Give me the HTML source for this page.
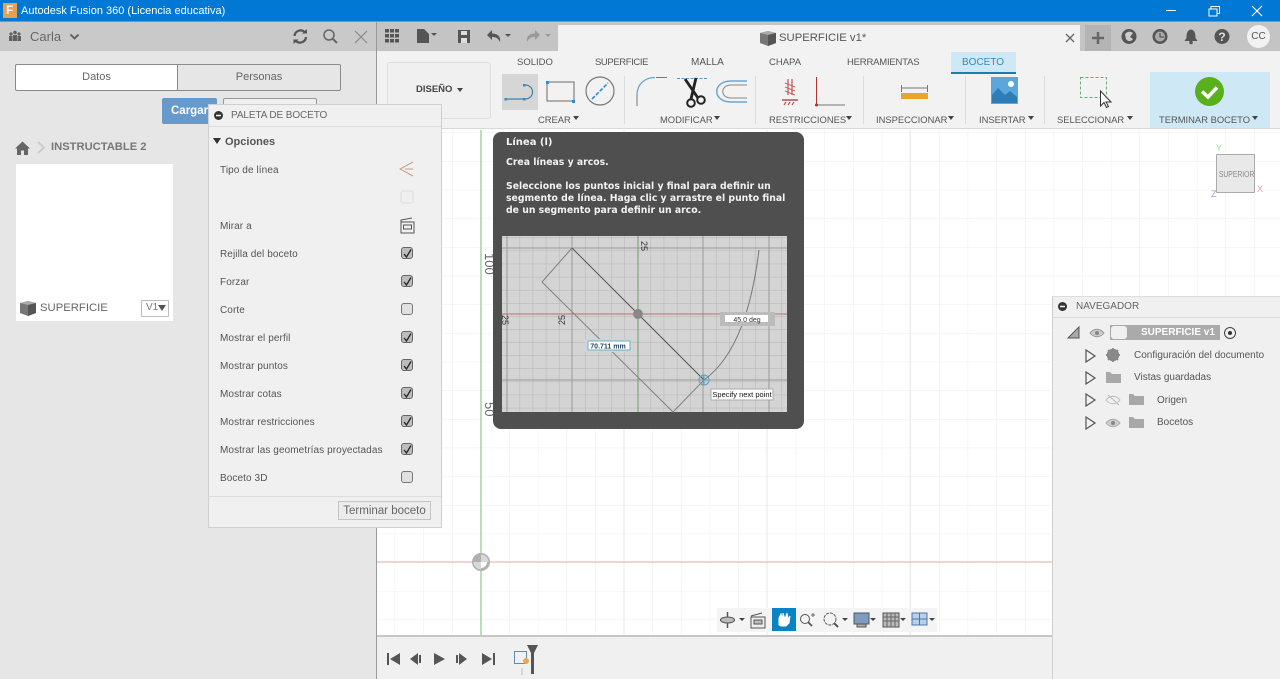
<!DOCTYPE html>
<html><head><meta charset="utf-8"><title>Fusion 360</title>
<style>
html,body{margin:0;padding:0;width:1280px;height:679px;overflow:hidden;background:#fff}
body{position:relative;font-family:"Liberation Sans",sans-serif;color:#555}
.a,.t{position:absolute}
.t{white-space:nowrap;line-height:14px;font-size:10px}
svg{position:absolute;overflow:visible}
.c{text-align:center}
.tab{top:56px;font-size:9.5px;color:#555}
.lab{top:113px;font-size:9.4px;color:#555}
.sep{position:absolute;top:76px;width:1px;height:48px;background:#dcdcdc}
.row{left:220px;font-size:10px;color:#555;letter-spacing:.09px}
.cb{position:absolute;left:401px;width:10px;height:10px;border:1px solid #666;border-radius:3px;background:#bdbdbd}
.tip{left:506px;color:#f2f2f2;font-family:"DejaVu Sans",sans-serif;font-weight:bold;font-size:9.3px;line-height:12px}
.nav{font-size:10px;color:#555}
</style></head><body>

<!-- canvas -->
<svg style="left:377px;top:130px" width="903" height="505">
<defs><pattern id="g" x="-10.5" y="3" width="28.65" height="28.65" patternUnits="userSpaceOnUse"><path d="M28.65 0V28.65M0 28.65H28.65" stroke="#ececec" fill="none"/></pattern></defs>
<rect width="903" height="505" fill="#fff"/><rect width="903" height="505" fill="url(#g)"/>
<path d="M247 0V505M390 0V505M533 0V505" stroke="#e8e8e8"/>
<path d="M0 432H676" stroke="#e6aeae"/><path d="M104 0V505" stroke="#a6d8a6" stroke-width="1.600"/>
<circle cx="104" cy="432" r="7.500" fill="#fff" stroke="#b0b0b0" stroke-width="3"/><path d="M104 432V424.500A7.500 7.500 0 0 0 96.500 432Z" fill="#b0b0b0"/><path d="M104 432V424.500A7.500 7.500 0 0 1 111.500 432Z" fill="#d8d8d8"/><path d="M104 432V439.500A7.500 7.500 0 0 1 96.500 432Z" fill="#d8d8d8"/>
<text transform="translate(108,123) rotate(90)" font-family="Liberation Sans" font-size="13" fill="#666">100</text>
<text transform="translate(108,272) rotate(90)" font-family="Liberation Sans" font-size="13" fill="#666">50</text>
</svg>

<!-- title bar -->
<div class="a" style="left:0;top:0;width:1280px;height:21px;background:#0078d4"></div>
<div class="a" style="left:0;top:21px;width:1280px;height:1px;background:#5b9fd6"></div>
<div class="a" style="left:3px;top:3px;width:14px;height:15px;background:#e8a050"></div>
<div class="t" style="left:6px;top:3px;font-size:12px;font-weight:bold;color:#fff">F</div>
<div class="t" style="left:21px;top:4px;font-size:11px;color:#fff">Autodesk Fusion 360 (Licencia educativa)</div>
<svg style="left:1160px;top:3px" width="110" height="16" fill="none" stroke="#fff"><path d="M6 7.500H16"/><path d="M49 6H57V13H49ZM51 6V3.500H59.500V10.500H57" stroke-width="1"/><path d="M92 3L102 13M102 3L92 13" stroke-width="1.200"/></svg>

<!-- left panel -->
<div class="a" style="left:0;top:22px;width:376px;height:657px;background:#e6e6e6"></div>
<div class="a" style="left:0;top:22px;width:376px;height:29px;background:#c9c9c9"></div>
<svg style="left:7px;top:30px" width="16" height="12" fill="#5f5f5f"><circle cx="4" cy="4" r="1.600"/><circle cx="8" cy="2.500" r="1.800"/><circle cx="12" cy="4" r="1.600"/><rect x="2" y="6" width="3.500" height="5"/><rect x="6" y="5" width="4" height="6"/><rect x="10.500" y="6" width="3.500" height="5"/></svg>
<div class="t" style="left:30px;top:30px;font-size:13px;color:#666">Carla</div>
<svg style="left:69px;top:33px" width="11" height="8" fill="none" stroke="#666" stroke-width="2"><path d="M1.500 1.500L5.500 5.500L9.500 1.500"/></svg>
<svg style="left:292px;top:28px" width="78" height="17" fill="none" stroke="#555"><path d="M2.500 8A6 6 0 0 1 13 4.500M14 9A6 6 0 0 1 3.500 12.500" stroke-width="2.200"/><path d="M10 5.500H15V1ZM6.500 11.500H1.500V16Z" fill="#555" stroke="none"/><circle cx="37" cy="7" r="5" stroke="#666" stroke-width="1.500"/><path d="M41 11L45 15" stroke="#666" stroke-width="2"/><path d="M63 3L75 15M75 3L63 15" stroke="#888" stroke-width="1.200"/></svg>

<div class="a" style="left:15px;top:64px;width:324px;height:25px;border:1px solid #8a8a8a;border-radius:2px;background:#e6e6e6"></div>
<div class="a" style="left:16px;top:65px;width:161px;height:25px;background:#fff;border-right:1px solid #8a8a8a;border-radius:2px 0 0 2px"></div>
<div class="t c" style="left:16px;top:70px;width:161px;font-size:11px;color:#666">Datos</div>
<div class="t c" style="left:178px;top:70px;width:162px;font-size:11px;color:#666">Personas</div>
<div class="a" style="left:162px;top:98px;width:55px;height:26px;background:#6699cc;border-radius:2px"></div>
<div class="t" style="left:171px;top:104px;font-size:11.500px;font-weight:bold;color:#fff">Cargar</div>
<div class="a" style="left:223px;top:98px;width:92px;height:10px;border:1px solid #999;border-bottom:0;border-radius:2px 2px 0 0;background:#efefef"></div>

<svg style="left:15px;top:141px" width="15" height="14" fill="#666"><path d="M7.500 0.500L15 7.500H13V14H9V9.500H6V14H2V7.500H0Z"/></svg>
<svg style="left:36px;top:141px" width="10" height="13" fill="none" stroke="#ccc" stroke-width="2"><path d="M2 1L8 6.500L2 12"/></svg>
<div class="t" style="left:51px;top:140px;font-size:11.200px;font-weight:bold;color:#777">INSTRUCTABLE 2</div>
<div class="a" style="left:16px;top:164px;width:157px;height:157px;background:#fff"></div>
<svg style="left:20px;top:301px" width="16" height="15"><path d="M0 2L8 0L16 2V12L8 15L0 12Z" fill="#777"/><path d="M0 2L8 4L16 2L8 0Z" fill="#aaa"/><path d="M8 4V15L16 12V2Z" fill="#555"/></svg>
<div class="t" style="left:40px;top:301px;font-size:11.300px;color:#666">SUPERFICIE</div>
<div class="a" style="left:141px;top:300px;width:26px;height:15px;border:1px solid #bbb;border-radius:1px;background:#fff"></div>
<div class="t" style="left:146px;top:301px;font-size:10px;color:#777">V1</div>
<svg style="left:158px;top:305px" width="8" height="6" fill="#555"><path d="M0 0H8L4 6Z"/></svg>

<!-- top bar -->
<div class="a" style="left:377px;top:22px;width:903px;height:29px;background:#c4c4c4"></div>
<div class="a" style="left:376px;top:22px;width:1px;height:657px;background:#9a9a9a"></div>
<div class="a" style="left:558px;top:25px;width:522px;height:26px;background:#f2f2f2"></div>
<div class="a" style="left:377px;top:51px;width:903px;height:78px;background:#f2f2f2"></div>
<div class="a" style="left:377px;top:128px;width:903px;height:1px;background:#d8d8d8"></div>
<svg style="left:385px;top:28px" width="170" height="17">
<g fill="#555"><rect x="0" y="1" width="4" height="3.500"/><rect x="5" y="1" width="4" height="3.500"/><rect x="10" y="1" width="4" height="3.500"/><rect x="0" y="6" width="4" height="3.500"/><rect x="5" y="6" width="4" height="3.500"/><rect x="10" y="6" width="4" height="3.500"/><rect x="0" y="11" width="4" height="3.500"/><rect x="5" y="11" width="4" height="3.500"/><rect x="10" y="11" width="4" height="3.500"/>
<path d="M32 1H39L44 6V15H32Z"/><path d="M46 5H52L49 8Z"/>
<path d="M73 2H85V15H73Z"/><path d="M102 7L107 2V5.500C112 5.500 116 8 115 14C113 10 111 9 107 9V12Z"/><path d="M120 6H126L123 9Z"/></g>
<rect x="76" y="3" width="6" height="4" fill="#ddd"/><rect x="76" y="10" width="6" height="5" fill="#ddd"/>
<g fill="#999"><path d="M160 7L155 2V5.500C150 5.500 146 8 147 14C149 10 151 9 155 9V12Z" transform="translate(-5,0)"/><path d="M160 6H166L163 9Z"/></g>
</svg>
<svg style="left:760px;top:31px" width="16" height="15"><path d="M0 2L8 0L16 2V12L8 15L0 12Z" fill="#777"/><path d="M0 2L8 4L16 2L8 0Z" fill="#aaa"/><path d="M8 4V15L16 12V2Z" fill="#555"/></svg>
<div class="t" style="left:779px;top:31px;font-size:11.300px;color:#555">SUPERFICIE v1*</div>
<svg style="left:1065px;top:33px" width="10" height="10" fill="none" stroke="#666" stroke-width="1.300"><path d="M1 1L9 9M9 1L1 9"/></svg>
<div class="a" style="left:1085px;top:25px;width:26px;height:26px;background:#b4b4b4"></div>
<svg style="left:1091px;top:31px" width="14" height="14" fill="none" stroke="#666" stroke-width="2.500"><path d="M7 1V13M1 7H13"/></svg>
<svg style="left:1121px;top:28px" width="150" height="18" fill="#555">
<circle cx="8" cy="8.500" r="7.500"/><path d="M4 6.500A5 5 0 0 1 12 5L9 9L12 11A4 4 0 0 1 5 11Z" fill="#ccc"/>
<circle cx="39" cy="8.500" r="7.500"/><circle cx="39" cy="8.500" r="5" fill="#aaa"/><path d="M39 5V9H43" stroke="#444" fill="none"/>
<path d="M70 1.500C66 2 65.500 6 65.500 10L63.500 13H76.500L74.500 10C74.500 6 74 2 70 1.500Z"/><circle cx="70" cy="14.500" r="1.800"/>
<circle cx="101" cy="8.500" r="7.500"/><text x="101" y="13" text-anchor="middle" font-size="12" font-weight="bold" fill="#ddd" font-family="Liberation Sans">?</text></svg>
<div class="a" style="left:1247px;top:25px;width:23px;height:23px;border-radius:50%;background:#f2f2f2"></div>
<div class="t c" style="left:1247px;top:30px;width:23px;font-size:10px;color:#555">CC</div>

<!-- diseño -->
<div class="a" style="left:387px;top:62px;width:102px;height:55px;background:#f0f0f0;border:1px solid #dedede;border-radius:3px"></div>
<div class="t" style="left:416px;top:83px;font-size:9.500px;font-weight:bold;color:#444">DISEÑO</div>
<svg style="left:457px;top:88px" width="6" height="4" fill="#444"><path d="M0 0H6L3 4Z"/></svg>

<!-- tabs -->
<div class="t tab" style="left:517px">SOLIDO</div>
<div class="t tab" style="left:595px;letter-spacing:-.4px">SUPERFICIE</div>
<div class="t tab" style="left:691px;font-size:10px">MALLA</div>
<div class="t tab" style="left:769px">CHAPA</div>
<div class="t tab" style="left:847px;letter-spacing:-.2px">HERRAMIENTAS</div>
<div class="a" style="left:951px;top:52px;width:65px;height:20px;background:#cfe8f5"></div>
<div class="a" style="left:951px;top:72px;width:65px;height:2px;background:#1a7fb0"></div>
<div class="t tab" style="left:962px;color:#2a8fc5;font-size:10px">BOCETO</div>

<div class="a" style="left:502px;top:74px;width:36px;height:36px;background:#d6d6d6"></div>
<svg style="left:500px;top:74px" width="350" height="36" fill="none" stroke="#777">
<path d="M6 25H25C35 25 35 11 25 11" stroke="#4a7fa5" stroke-width="1.200"/>
<g fill="#2a8fd0" stroke="none"><rect x="4.500" y="24" width="2.500" height="2.500"/><rect x="23" y="24" width="2.500" height="2.500"/><rect x="23" y="10" width="2.500" height="2.500"/></g>
<rect x="47" y="8" width="27" height="19" stroke-width="1.100"/>
<g fill="#2a8fd0" stroke="none"><rect x="46" y="7" width="3" height="3"/><rect x="72" y="26" width="3" height="3"/></g>
<circle cx="100" cy="17" r="14" stroke-width="1.200"/><path d="M92 25L108 9" stroke="#2a8fd0" stroke-width="1.600" stroke-dasharray="4 1.500"/>
<path d="M137 32V21" stroke="#777"/><path d="M137 21C137 10 145 3.500 155 3.500" stroke="#6aa7d0" stroke-width="1.300"/><path d="M156 3.500H167" stroke="#777"/>
<path d="M177 4.500H207" stroke="#5a9ac8" stroke-dasharray="3 1.500"/>
<path d="M185 5L198 24M196 4L191 25" stroke="#222" stroke-width="2.800"/><circle cx="191" cy="29" r="3.800" stroke="#222" stroke-width="2"/><circle cx="201" cy="26" r="3.800" stroke="#222" stroke-width="2"/>
<path d="M247 7H231C212 7 212 28 231 28H247" stroke="#6aa7d0" stroke-width="1.500"/><path d="M247 11H231C220 11 220 24 231 24H247" stroke="#888"/>
<path d="M288 5V21M292 5V21" stroke="#a33"/><path d="M285 9L295 13M285 13L295 17M285 17L295 21" stroke="#c66"/><path d="M282 26H298" stroke="#a33" stroke-width="1.300"/><path d="M284 31L286 28M288 31L290 28M292 31L294 28" stroke="#a33"/>
<path d="M316.500 3V31" stroke="#a33"/><path d="M316 31H345" stroke="#777"/><circle cx="316.500" cy="31" r="1.500" fill="#a33" stroke="none"/>
</svg>
<div class="sep" style="left:624px"></div><div class="sep" style="left:755px"></div><div class="sep" style="left:863px"></div><div class="sep" style="left:965px"></div><div class="sep" style="left:1044px"></div>
<div class="a" style="left:1150px;top:72px;width:120px;height:56px;background:#cfe8f5"></div>
<svg style="left:900px;top:76px" width="340" height="40" fill="none">
<path d="M1.500 9V16M27.500 9V16M1 12H28" stroke="#777"/><rect x="1" y="17" width="27" height="6" fill="#eba42c"/>
<rect x="91" y="1" width="27" height="27" fill="#5da6dc"/><path d="M92 27V19L98 12L105 19L110 15L117 21V27Z" fill="#2c7db8"/><circle cx="111" cy="8" r="3" fill="#fff"/>
<rect x="180.500" y="1.500" width="26" height="20" stroke="#70a878" stroke-dasharray="3 2"/>
<path d="M200.500 15V30L204 26.500L206.500 31.500L208.500 30.500L206 26H211Z" fill="#fff" stroke="#333"/>
<circle cx="309.500" cy="15.500" r="14.500" fill="#5ab01c"/><path d="M302 15.500L308 21L317 11.500" stroke="#fff" stroke-width="3.500"/>
</svg>
<div class="t lab" style="left:538px">CREAR</div><svg style="left:573px;top:116px" width="6" height="4" fill="#444"><path d="M0 0H6L3 4Z"/></svg>
<div class="t lab" style="left:660px">MODIFICAR</div><svg style="left:714px;top:116px" width="6" height="4" fill="#444"><path d="M0 0H6L3 4Z"/></svg>
<div class="t lab" style="left:769px">RESTRICCIONES</div><svg style="left:846px;top:116px" width="6" height="4" fill="#444"><path d="M0 0H6L3 4Z"/></svg>
<div class="t lab" style="left:876px">INSPECCIONAR</div><svg style="left:948px;top:116px" width="6" height="4" fill="#444"><path d="M0 0H6L3 4Z"/></svg>
<div class="t lab" style="left:979px">INSERTAR</div><svg style="left:1028px;top:116px" width="6" height="4" fill="#444"><path d="M0 0H6L3 4Z"/></svg>
<div class="t lab" style="left:1057px">SELECCIONAR</div><svg style="left:1127px;top:116px" width="6" height="4" fill="#444"><path d="M0 0H6L3 4Z"/></svg>
<div class="t lab" style="left:1159px">TERMINAR BOCETO</div><svg style="left:1252px;top:116px" width="6" height="4" fill="#444"><path d="M0 0H6L3 4Z"/></svg>

<!-- viewcube -->
<div class="a" style="left:1216px;top:154px;width:37px;height:37px;background:#e9e9e9;border:1px solid #aaa;border-radius:1px"></div>
<div class="t c" style="left:1216px;top:168px;width:38px;font-size:8px;color:#888;transform:scaleX(.85)">SUPERIOR</div>
<div class="t" style="left:1216px;top:141px;font-size:9px;color:#a6d8a6">Y</div>
<div class="t" style="left:1257px;top:182px;font-size:9px;color:#f0a0a0">X</div>
<div class="t" style="left:1211px;top:187px;font-size:9px;color:#a0a0e0">Z</div>

<!-- tooltip -->
<div class="a" style="left:493px;top:132px;width:311px;height:297px;background:#4f4f4f;border-radius:8px"></div>
<div class="t tip" style="left:506px;top:137px;font-size:10px">Línea (l)</div>
<div class="t tip" style="left:506px;top:157px">Crea líneas y arcos.</div>
<div class="t tip" style="left:506px;top:181px">Seleccione los puntos inicial y final para definir un</div>
<div class="t tip" style="left:506px;top:193px">segmento de línea. Haga clic y arrastre el punto final</div>
<div class="t tip" style="left:506px;top:205px">de un segmento para definir un arco.</div>
<svg style="left:502px;top:236px" width="285" height="176">
<defs><pattern id="g2" x="5" y="2" width="13.100" height="13.100" patternUnits="userSpaceOnUse"><path d="M13.100 0V13.100M0 13.100H13.100" stroke="#b4b4b4" fill="none"/></pattern></defs>
<rect width="285" height="176" fill="#d4d4d4"/><rect width="285" height="176" fill="url(#g2)"/>
<path d="M5 0V176M70 0V176M136 0V176M201 0V176M267 0V176M0 12H285M0 78H285M0 144H285" stroke="#9a9a9a" fill="none"/>
<path d="M0 78H285" stroke="#c46a6a"/><path d="M136 0V176" stroke="#6aa06a"/>
<path d="M70 12L40 46L171 176L202 144" fill="none" stroke="#808080"/><path d="M70 12L202 144" fill="none" stroke="#555"/>
<path d="M202 144C235 120 250 70 257 14" fill="none" stroke="#777"/>
<circle cx="136" cy="78" r="5" fill="#888"/><circle cx="202" cy="144" r="5" fill="none" stroke="#5a9fc0"/><path d="M197 144H207M202 139V149" stroke="#5a9fc0"/>
<rect x="218" y="76" width="55" height="14" fill="#bbb"/><rect x="223" y="79" width="43" height="7" fill="#fff"/>
<text x="245" y="86" text-anchor="middle" font-family="Liberation Sans" font-size="7" fill="#333">45.0 deg</text>
<rect x="83" y="103" width="47" height="13" fill="#c5d8ea"/><rect x="86" y="105" width="42" height="9" fill="#fff" stroke="#7aa"/>
<text x="106" y="112.500" text-anchor="middle" font-family="Liberation Sans" font-size="7" font-weight="bold" fill="#246">70.711 mm</text>
<rect x="209" y="153" width="62" height="11" fill="#fff" stroke="#aaa"/>
<text x="240" y="161" text-anchor="middle" font-family="Liberation Sans" font-size="7.500" fill="#111">Specify next point</text>
<text transform="translate(139,5) rotate(90)" font-family="Liberation Sans" font-size="9" fill="#333">25</text>
<text transform="translate(63,89) rotate(-90)" font-family="Liberation Sans" font-size="9" fill="#333">25</text>
<text transform="translate(0,79) rotate(90)" font-family="Liberation Sans" font-size="9" fill="#333">25</text>
</svg>

<!-- palette -->
<div class="a" style="left:208px;top:104px;width:232px;height:422px;background:#f0f0f0;border:1px solid #cfcfcf"></div>
<div class="a" style="left:209px;top:126px;width:232px;height:1px;background:#dcdcdc"></div>
<svg style="left:214px;top:111px" width="9" height="9"><circle cx="4.500" cy="4.500" r="4.500" fill="#333"/><rect x="2" y="3.700" width="5" height="1.600" fill="#eee"/></svg>
<div class="t" style="left:231px;top:109px;font-size:10px;color:#666;letter-spacing:-.1px">PALETA DE BOCETO</div>
<svg style="left:213px;top:138px" width="8" height="6" fill="#333"><path d="M0 0H8L4 6Z"/></svg>
<div class="t" style="left:225px;top:135px;font-size:11px;font-weight:bold;color:#555">Opciones</div>
<div class="t row" style="top:164px">Tipo de línea</div>
<div class="t row" style="top:220px">Mirar a</div>
<div class="t row" style="top:248px">Rejilla del boceto</div>
<div class="t row" style="top:276px">Forzar</div>
<div class="t row" style="top:304px">Corte</div>
<div class="t row" style="top:332px">Mostrar el perfil</div>
<div class="t row" style="top:360px">Mostrar puntos</div>
<div class="t row" style="top:388px">Mostrar cotas</div>
<div class="t row" style="top:416px">Mostrar restricciones</div>
<div class="t row" style="top:444px">Mostrar las geometrías proyectadas</div>
<div class="t row" style="top:472px">Boceto 3D</div>
<svg style="left:398px;top:160px" width="18" height="74" fill="none">
<path d="M15 2L2 9L15 16M7 9H15" stroke="#c8a080"/>
<rect x="3" y="31" width="12" height="12" rx="2" stroke="#ddd"/>
<path d="M3 62H16V73H3ZM3 62V60L14 58M5.500 65H13.500V69H5.500Z" stroke="#555"/>
</svg>
<div class="cb" style="top:247px"></div><div class="cb" style="top:275px"></div><div class="cb" style="top:303px;background:#e0e0e0;border-color:#777"></div><div class="cb" style="top:331px"></div><div class="cb" style="top:359px"></div><div class="cb" style="top:387px"></div><div class="cb" style="top:415px"></div><div class="cb" style="top:443px"></div><div class="cb" style="top:471px;background:#e0e0e0;border-color:#777"></div>
<svg style="left:401px;top:247px" width="13" height="240" fill="none" stroke="#222" stroke-width="1.300"><path d="M3 7L5.500 10L10 2.500"/><path d="M3 35L5.500 38L10 30.500"/><path d="M3 91L5.500 94L10 86.500"/><path d="M3 119L5.500 122L10 114.500"/><path d="M3 147L5.500 150L10 142.500"/><path d="M3 175L5.500 178L10 170.500"/><path d="M3 203L5.500 206L10 198.500"/></svg>
<div class="a" style="left:209px;top:496px;width:232px;height:1px;background:#dcdcdc"></div>
<div class="a" style="left:338px;top:501px;width:91px;height:17px;background:#ececec;border:1px solid #c4c4c4"></div>
<div class="t c" style="left:338px;top:504px;width:93px;font-size:11.500px;color:#666">Terminar boceto</div>

<!-- nav toolbar -->
<div class="a" style="left:717px;top:608px;width:220px;height:24px;background:#f4f4f4"></div>
<div class="a" style="left:772px;top:608px;width:24px;height:23px;background:#0a83c6"></div>
<svg style="left:718px;top:610px" width="220" height="20" fill="none" stroke="#555">
<path d="M9.500 2V18M2 10H17" stroke-width="1.500"/><ellipse cx="9.500" cy="10" rx="7" ry="3" fill="#bbb"/>
<path d="M21 8H27L24 11ZM124 8H130L127 11ZM152 8H158L155 11ZM182 8H188L185 11ZM211 8H217L214 11" fill="#444" stroke="none"/>
<rect x="33" y="7" width="14" height="11" fill="#eee"/><rect x="36" y="10" width="8" height="4" fill="#bbb"/><path d="M33 6L44 3"/>
<path d="M61 15V8L63 4L65 9V3L67 9L69 3L70 9L72 6L71 13L68 16H63Z" fill="#fff" stroke="#fff"/>
<circle cx="87" cy="9" r="4.500"/><path d="M90 12L94 16" stroke-width="1.800"/><path d="M93 5H97M95 3V7" stroke="#666"/>
<circle cx="112" cy="9" r="6" stroke-dasharray="3 1"/><path d="M116 13L120 17" stroke-width="2"/>
<rect x="136" y="3" width="15" height="11" fill="#7c9cc0"/><path d="M139 14H148V17H139Z" fill="#aaa"/>
<rect x="165" y="3" width="16" height="14" fill="#bbb"/><path d="M169 3V17M173 3V17M177 3V17M165 7H181M165 11H181" stroke="#666"/>
<rect x="194" y="3" width="15" height="12" fill="#b8d0e8" stroke="#4a78a8"/><path d="M201.500 3V15M194 9H209" stroke="#4a78a8"/>
</svg>

<!-- bottom -->
<div class="a" style="left:377px;top:635px;width:675px;height:44px;background:#f0f0f0"></div>
<div class="a" style="left:377px;top:635px;width:675px;height:2px;background:#c6c6c6"></div>
<div class="a" style="left:1053px;top:296px;width:227px;height:383px;background:#f0f0f0"></div>
<div class="a" style="left:1052px;top:296px;width:1px;height:383px;background:#cfcfcf"></div>
<svg style="left:385px;top:650px" width="160" height="28" fill="#555">
<path d="M2 3H4V15H2ZM15 3V15L5 9Z"/><path d="M25 9L33 3V15ZM34 5H36V13H34Z"/><path d="M49 3L60 9L49 15Z"/><path d="M71 5H73V13H71ZM74 3L82 9L74 15Z"/><path d="M97 3L107 9L97 15ZM108 3H110V15H108Z"/>
<rect x="129.500" y="1.500" width="12" height="12" fill="none" stroke="#5c8fb8"/><circle cx="141" cy="11" r="3" fill="#eba84c"/>
<path d="M137 18V25" stroke="#bbb" fill="none"/>
<path d="M142 -5H153L149 3V24H146V3Z" fill="#555"/>
</svg>

<!-- navigator -->
<div class="a" style="left:1053px;top:296px;width:227px;height:1px;background:#ddd"></div>
<div class="a" style="left:1053px;top:317px;width:227px;height:1px;background:#dcdcdc"></div>
<svg style="left:1058px;top:302px" width="9" height="9"><circle cx="4.500" cy="4.500" r="4.500" fill="#333"/><rect x="2" y="3.700" width="5" height="1.600" fill="#eee"/></svg>
<div class="t" style="left:1076px;top:300px;font-size:10px;color:#666">NAVEGADOR</div>
<svg style="left:1067px;top:325px" width="180" height="105" fill="none">
<path d="M1 13L12 2V13Z" fill="#aaa" stroke="#555"/>
<path d="M23 8C27 3 33 3 37 8C33 13 27 13 23 8Z" fill="#ccc" stroke="#999"/><circle cx="30" cy="8" r="2" fill="#888"/>
<circle cx="163" cy="8" r="5.500" stroke="#444"/><circle cx="163" cy="8" r="2" fill="#333"/>
<path d="M19 25V37L28 31ZM19 47V59L28 53ZM19 69V81L28 75ZM19 92V104L28 98Z" stroke="#555" fill="#f2f2f2" stroke-width="1.200"/>
<circle cx="46" cy="30" r="4.500" stroke="#888" stroke-width="3.500"/><path d="M46 23V37M39 30H53M41 25L51 35M51 25L41 35" stroke="#888" stroke-width="1.800"/>
<path d="M39 47H43L45 49H54V58H39Z" fill="#a8a8a8"/>
<path d="M62 69H66L68 71H77V80H62ZM62 92H66L68 94H77V103H62Z" fill="#a8a8a8"/>
<path d="M39 75C43 70 49 70 53 75C49 80 43 80 39 75ZM41 70L52 80" stroke="#bbb"/>
<path d="M39 98C43 93 49 93 53 98C49 103 43 103 39 98Z" fill="#ccc" stroke="#aaa"/><circle cx="46" cy="98" r="2" fill="#888"/>
</svg>
<div class="a" style="left:1110px;top:325px;width:110px;height:15px;background:#aaa"></div>
<div class="a" style="left:1111px;top:326px;width:16px;height:13px;background:#f0f0f0;border-radius:3px"></div>
<div class="t" style="left:1141px;top:326px;font-size:10px;font-weight:bold;color:#fff">SUPERFICIE v1</div>
<div class="t nav" style="left:1134px;top:349px">Configuración del documento</div>
<div class="t nav" style="left:1134px;top:371px">Vistas guardadas</div>
<div class="t nav" style="left:1157px;top:394px">Origen</div>
<div class="t nav" style="left:1157px;top:416px">Bocetos</div>
</body></html>
